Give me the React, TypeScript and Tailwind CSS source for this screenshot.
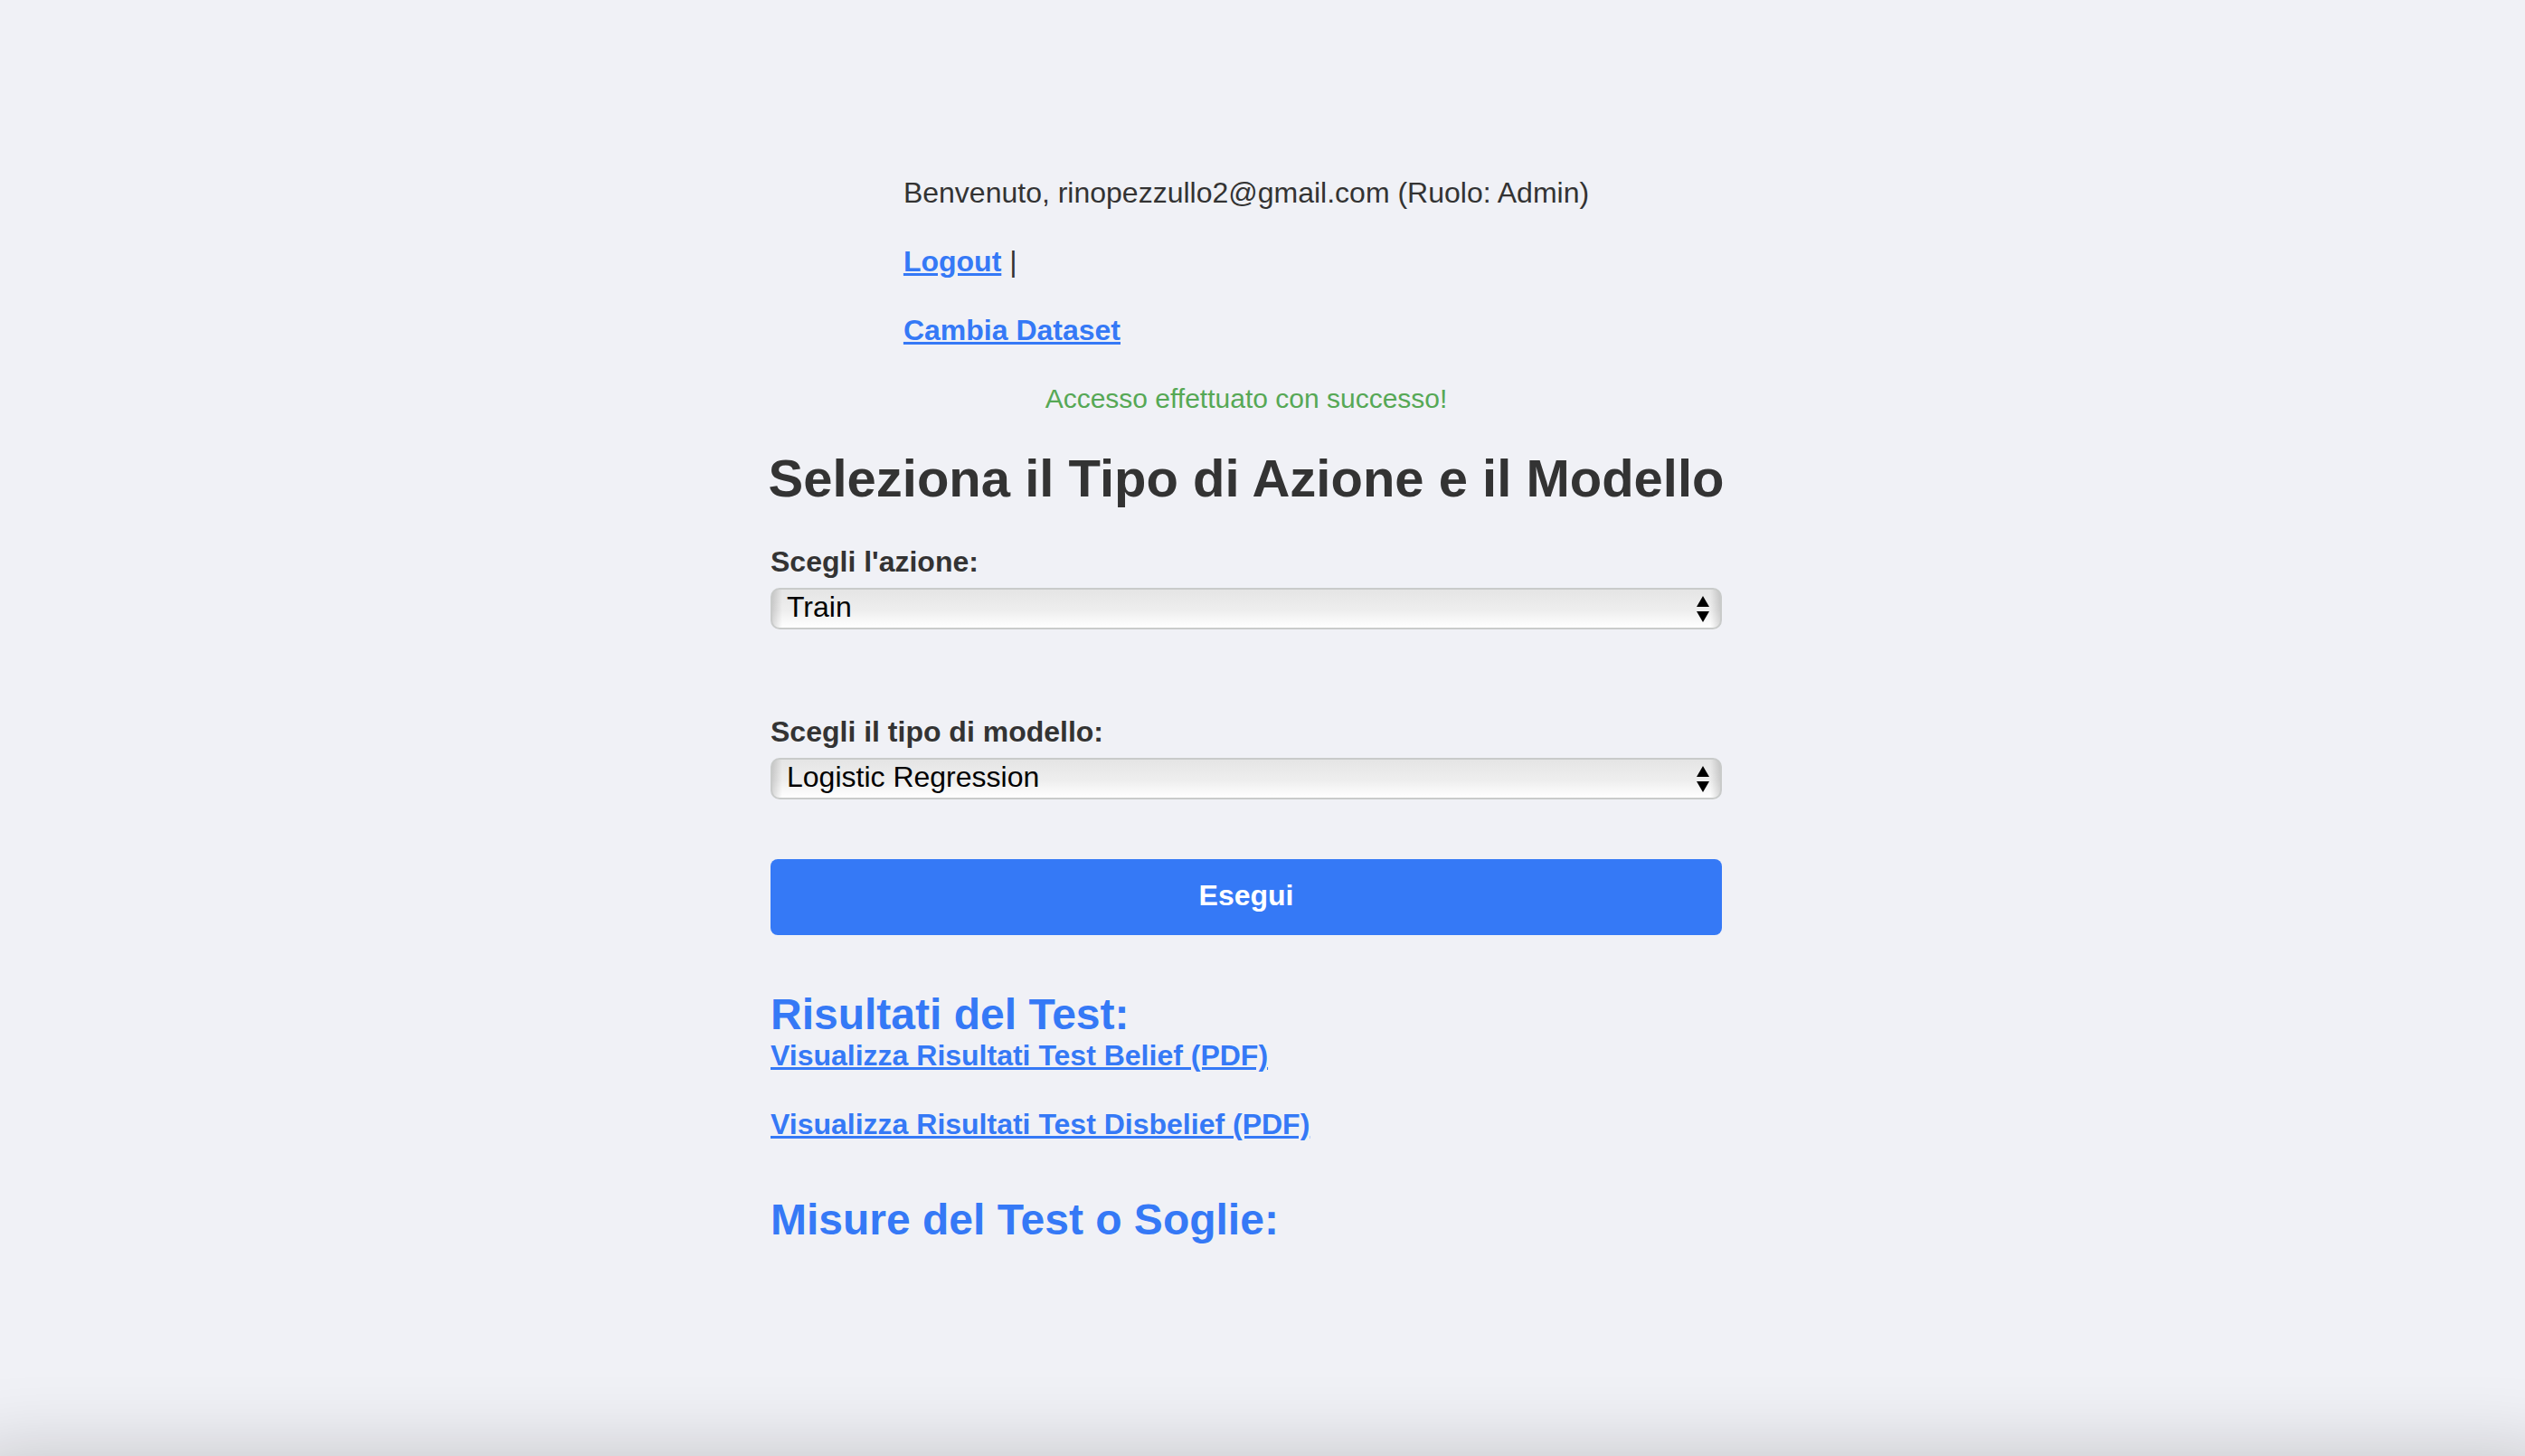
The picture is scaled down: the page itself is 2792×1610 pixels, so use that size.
import type { ReactNode } from "react";

type SelectFieldProps = {
  id: string;
  label: string;
  options: string[];
};

function SelectField({ id, label, options }: SelectFieldProps) {
  return (
    <div className="flex w-full flex-col gap-[11px]">
      <label htmlFor={id} className="text-[32px] leading-9 font-bold text-[#333333]">
        {label}
      </label>
      <div className="relative">
        <select
          id={id}
          className="block h-[46px] w-full appearance-none rounded-[10px] border-2 border-[#c9cbca] bg-[linear-gradient(to_right,rgba(0,0,0,0.14),transparent_11px,transparent_calc(100%_-_11px),rgba(0,0,0,0.14)),linear-gradient(to_bottom,#e5e5e5,#eeeeee_55%,#ffffff)] pr-14 pb-1 pl-4 text-[32px] leading-9 text-black"
        >
          {options.map((option) => (
            <option key={option}>{option}</option>
          ))}
        </select>
        <svg
          viewBox="0 0 14 29"
          className="pointer-events-none absolute top-[9px] right-[14px] h-[29px] w-[14px]"
          aria-hidden="true"
        >
          <path d="M7 0 14 12H0ZM7 29 0 17h14Z" />
        </svg>
      </div>
    </div>
  );
}

function TextLink({ href, children }: { href: string; children: ReactNode }) {
  return (
    <a href={href} className="font-bold text-[#3579f6] underline">
      {children}
    </a>
  );
}

export default function App() {
  return (
    <div className="relative flex min-h-screen justify-center overflow-hidden bg-[#f0f1f6] pr-9 font-['Liberation_Sans',Arial,sans-serif] text-[32px] leading-9 text-[#333333]">
      <main className="flex w-full max-w-[1052px] flex-col items-center pt-[195px] pb-20">
        <div className="flex flex-col gap-10">
          <p>Benvenuto, rinopezzullo2@gmail.com (Ruolo: Admin)</p>
          <p>
            <TextLink href="#logout">Logout</TextLink> |
          </p>
          <p>
            <TextLink href="#dataset">Cambia Dataset</TextLink>
          </p>
        </div>

        <p role="status" className="mt-10 text-[30px] text-[#56a855]">
          Accesso effettuato con successo!
        </p>

        <h1 className="mt-9 text-[58px] leading-[68px] font-bold whitespace-nowrap">
          Seleziona il Tipo di Azione e il Modello
        </h1>

        <form className="mt-10 flex w-full flex-col" onSubmit={(event) => event.preventDefault()}>
          <SelectField id="azione" label="Scegli l'azione:" options={["Train", "Test"]} />
          <div className="mt-[95px]">
            <SelectField
              id="modello"
              label="Scegli il tipo di modello:"
              options={["Logistic Regression", "Random Forest"]}
            />
          </div>
          <button
            type="submit"
            className="mt-[66px] h-[84px] w-full rounded-lg bg-[#3579f6] pb-1 font-bold text-white"
          >
            Esegui
          </button>
        </form>

        <section className="mt-15 w-full">
          <h2 className="text-[48px] leading-[55px] font-bold text-[#3579f6]">Risultati del Test:</h2>
          <div className="flex flex-col gap-10">
            <p>
              <TextLink href="#belief">Visualizza Risultati Test Belief (PDF)</TextLink>
            </p>
            <p>
              <TextLink href="#disbelief">Visualizza Risultati Test Disbelief (PDF)</TextLink>
            </p>
          </div>
        </section>

        <section className="mt-15 w-full">
          <h2 className="text-[48px] leading-[55px] font-bold text-[#3579f6]">
            Misure del Test o Soglie:
          </h2>
        </section>
      </main>
      <div
        aria-hidden="true"
        className="pointer-events-none absolute -inset-x-10 -bottom-40 h-40 shadow-[0_0_90px_rgba(0,0,0,0.2)]"
      />
    </div>
  );
}
